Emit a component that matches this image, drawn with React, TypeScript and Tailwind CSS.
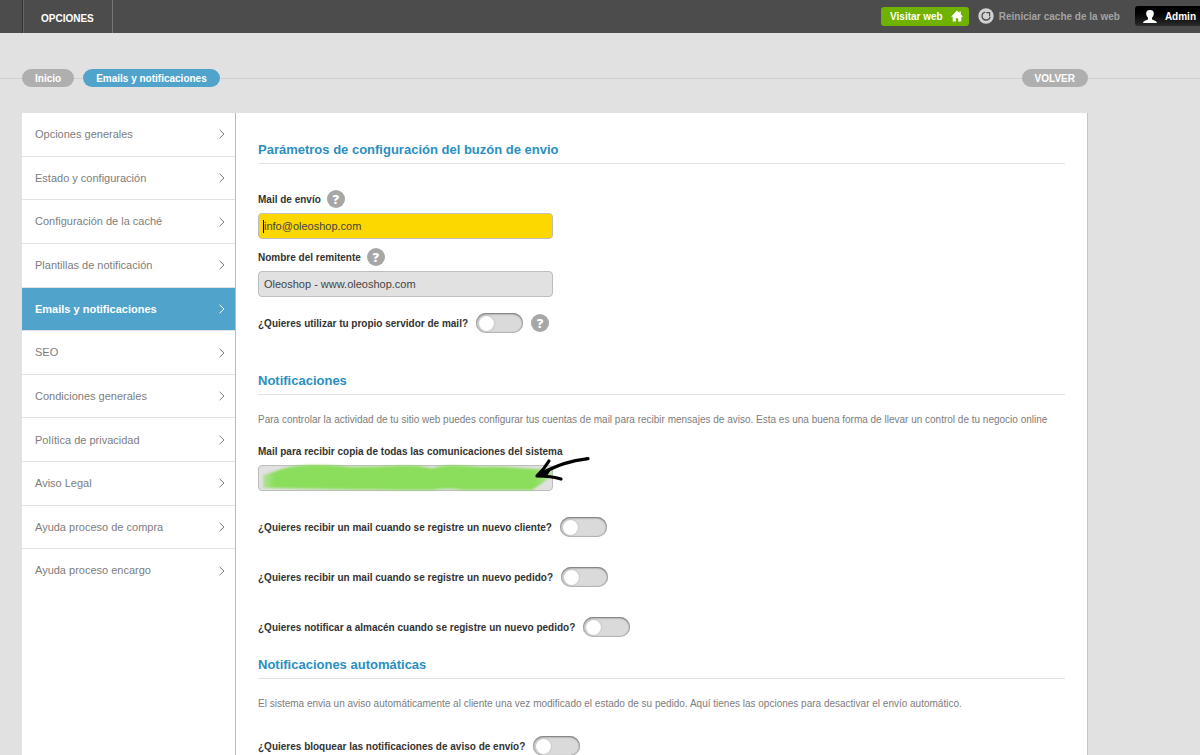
import { useState } from "react";

const menuItems = [
  "Opciones generales",
  "Estado y configuración",
  "Configuración de la caché",
  "Plantillas de notificación",
  "Emails y notificaciones",
  "SEO",
  "Condiciones generales",
  "Política de privacidad",
  "Aviso Legal",
  "Ayuda proceso de compra",
  "Ayuda proceso encargo",
];

const inputClass =
  "block h-[26px] w-[295px] rounded border border-[#bdbdbd] px-[5px] text-[11px] text-[#444] outline-none";

function HelpButton() {
  return (
    <button
      type="button"
      aria-label="Ayuda"
      className="flex size-[18px] items-center justify-center rounded-full bg-[#a6a6a6] font-['Open_Sans',sans-serif] text-[13px] leading-none font-extrabold text-white"
    >
      ?
    </button>
  );
}

interface ToggleRowProps {
  id: string;
  label: string;
  help?: boolean;
}

function ToggleRow({ id, label, help }: ToggleRowProps) {
  const [on, setOn] = useState(false);

  return (
    <div className="flex h-5 items-center gap-2">
      <label htmlFor={id} className="font-bold text-[#333]">
        {label}
      </label>
      <input
        id={id}
        type="checkbox"
        checked={on}
        onChange={() => setOn(!on)}
        className="flex h-5 w-[47px] appearance-none items-center rounded-full bg-[#dadada] px-[3px] shadow-[inset_0_1px_2px_#777,inset_0_0_1px_1px_#b4b4b4] before:size-[15px] before:rounded-full before:bg-white before:shadow-[0_0_2px_#aaa] checked:justify-end checked:bg-[#53a6cc]"
      />
      {help && <HelpButton />}
    </div>
  );
}

function SectionTitle({ children }: { children: string }) {
  return (
    <h2 className="border-b border-[#e2e2e2] pt-px pb-[3px] text-[13px] leading-5 font-bold text-[#2a8fc1]">
      {children}
    </h2>
  );
}

function TopBar() {
  return (
    <header className="flex h-[33px] items-stretch justify-between overflow-hidden bg-[#4c4c4c] pl-[22px] font-bold">
      <a
        href="#opciones"
        className="flex items-center border-r border-l border-r-[#777] border-l-[#333] px-[18px] pt-1 text-white shadow-[inset_1px_0_#666]"
      >
        OPCIONES
      </a>
      <div className="flex h-8 items-center">
        <a
          href="#web"
          className="mr-[9px] flex h-[19px] items-center gap-2 rounded-[3px] bg-[#70b200] pr-[6px] pl-[9px] text-white"
        >
          Visitar web
          <svg viewBox="0 0 12 12" className="size-3" fill="currentColor">
            <path d="M6 .6 L8.3 2.9 V1.4 H9.8 V4.4 L12 6.7 H10.3 V11.5 H7.2 V8.2 H4.8 V11.5 H1.7 V6.7 H0 Z" />
          </svg>
        </a>
        <button type="button" className="mr-[15px] flex items-center gap-[5px] text-[#a3a3a3]">
          <svg viewBox="0 0 16 16" className="size-4">
            <circle cx="8" cy="8" r="7.7" fill="#d2d2d2" />
            <path d="M7.2 4.1 A4 4 0 1 0 12 8.6" fill="none" stroke="#4c4c4c" strokeWidth="1.3" />
            <path d="M8.2 4.6 H11.6 V8" fill="none" stroke="#4c4c4c" strokeWidth="1.2" />
          </svg>
          Reiniciar cache de la web
        </button>
        <button
          type="button"
          className="flex h-5 items-center gap-2 rounded-l-[3px] bg-linear-to-b from-black to-[#2c2c2c] pr-1 pl-2 text-white"
        >
          <svg viewBox="0 0 14 13" className="h-[13px] w-[14px]" fill="currentColor">
            <path d="M7 0 C9.8 0 11 1.6 10.8 4 C10.6 5.8 9.8 7 9 7.8 V9.2 C10.2 10.4 13.6 10.6 14 13 H0 C.4 10.6 3.8 10.4 5 9.2 V7.8 C4.2 7 3.4 5.8 3.2 4 C3 1.6 4.2 0 7 0 Z" />
          </svg>
          Admin
        </button>
      </div>
    </header>
  );
}

function Breadcrumb() {
  return (
    <nav className="mt-9 flex items-center font-bold text-white">
      <span className="h-px w-[22px] bg-[#cfcfcf]" />
      <a href="#inicio" className="flex h-[18px] items-center rounded-full bg-[#afafaf] px-[13px]">
        Inicio
      </a>
      <span className="h-px w-[9px] bg-[#cfcfcf]" />
      <a href="#emails" className="flex h-[18px] items-center rounded-full bg-[#50a4cb] px-[13px]">
        Emails y notificaciones
      </a>
      <span className="h-px flex-1 bg-[#cfcfcf]" />
      <a href="#volver" className="flex h-[18px] items-center rounded-full bg-[#afafaf] px-[13px]">
        VOLVER
      </a>
      <span className="h-px w-28 bg-[#cfcfcf]" />
    </nav>
  );
}

function Sidebar() {
  const [active, setActive] = useState("Emails y notificaciones");

  return (
    <nav className="w-[214px] shrink-0 border-r border-[#bbb]">
      <ul className="flex h-[479px] flex-col text-[11px]">
        {menuItems.map((item) => (
          <li key={item} className="flex-1 border-b border-[#e2e2e2] last:border-b-0">
            <a
              href="#menu"
              onClick={() => setActive(item)}
              className={
                item === active
                  ? "flex h-full items-center justify-between bg-[#50a4cb] pr-[10px] pl-[13px] font-bold text-white"
                  : "flex h-full items-center justify-between pr-[10px] pl-[13px] text-[#7d7d7d]"
              }
            >
              {item}
              <svg viewBox="0 0 6 10" className="h-[10px] w-[6px]" fill="none" stroke="currentColor">
                <path d="M.6 .8 L5 5 L.6 9.2" />
              </svg>
            </a>
          </li>
        ))}
      </ul>
    </nav>
  );
}

function MailSettings() {
  return (
    <section>
      <SectionTitle>Parámetros de configuración del buzón de envio</SectionTitle>
      <div className="mt-[25px] flex h-5 items-center gap-[6px]">
        <label htmlFor="mail" className="font-bold text-[#333]">
          Mail de envío
        </label>
        <HelpButton />
      </div>
      <div className="relative mt-1">
        <input id="mail" type="email" defaultValue="info@oleoshop.com" className={`${inputClass} bg-[#fdd700]`} />
        {/* text cursor */}
        <span className="absolute top-[7px] left-[5px] h-[13px] w-px bg-black" />
      </div>
      <div className="mt-2 flex h-5 items-center gap-[6px]">
        <label htmlFor="sender" className="font-bold text-[#333]">
          Nombre del remitente
        </label>
        <HelpButton />
      </div>
      <input
        id="sender"
        type="text"
        defaultValue="Oleoshop - www.oleoshop.com"
        className={`${inputClass} mt-1 bg-[#e1e1e1]`}
      />
      <div className="mt-4">
        <ToggleRow id="own-server" label="¿Quieres utilizar tu propio servidor de mail?" help />
      </div>
    </section>
  );
}

function Notifications() {
  return (
    <section className="mt-[37px]">
      <SectionTitle>Notificaciones</SectionTitle>
      <p className="mt-[15px] leading-5 text-[#7d7d7d]">
        Para controlar la actividad de tu sitio web puedes configurar tus cuentas de mail para recibir mensajes de
        aviso. Esta es una buena forma de llevar un control de tu negocio online
      </p>
      <label htmlFor="copy" className="mt-3 block leading-5 font-bold text-[#333]">
        Mail para recibir copia de todas las comunicaciones del sistema
      </label>
      <div className="relative mt-[3px]">
        <input id="copy" type="email" className={`${inputClass} bg-[#e1e1e1]`} />
        {/* marker strokes and arrow over the address */}
        <svg viewBox="0 0 340 40" className="pointer-events-none absolute -top-2 left-0 h-10 w-[340px]">
          <defs>
            <filter id="soft" x="-5%" y="-20%" width="110%" height="140%">
              <feGaussianBlur stdDeviation="0.8" />
            </filter>
            <linearGradient id="marker">
              <stop offset="0" stopColor="#8bde5c" stopOpacity="0.5" />
              <stop offset="0.04" stopColor="#8bde5c" />
              <stop offset="0.94" stopColor="#8bde5c" />
              <stop offset="1" stopColor="#8bde5c" stopOpacity="0.5" />
            </linearGradient>
          </defs>
          <path
            d="M5 18 C12 17 20 12 32 10 C50 7 75 8 92 10 C120 10 140 8 158 9 C166 9 170 12 176 11 C190 7 205 9 225 10 C245 9 260 11 279 12 L294 12 V19 C289 22 284 27 274 33 H205 C195 32 190 31 175 33 C110 33 60 32 5 31 Z"
            fill="url(#marker)"
            filter="url(#soft)"
          />
          <g fill="none" stroke="#000" strokeLinecap="round" strokeLinejoin="round">
            <path d="M330 1.6 C312 3.5 300 8 282 17" strokeWidth="3.2" />
            <path d="M291 4 C288 9 284 14 279 19 C289 19 297 20 303 22" strokeWidth="3.2" />
            <path d="M279 19 L292 12 L288 19 Z" fill="#000" strokeWidth="2" />
          </g>
        </svg>
      </div>
      <div className="mt-[26px] flex flex-col gap-[30px]">
        <ToggleRow id="new-client" label="¿Quieres recibir un mail cuando se registre un nuevo cliente?" />
        <ToggleRow id="new-order" label="¿Quieres recibir un mail cuando se registre un nuevo pedido?" />
        <ToggleRow id="warehouse" label="¿Quieres notificar a almacén cuando se registre un nuevo pedido?" />
      </div>
    </section>
  );
}

function AutoNotifications() {
  return (
    <section className="mt-[17px]">
      <SectionTitle>Notificaciones automáticas</SectionTitle>
      <p className="mt-[15px] mb-[22px] leading-5 text-[#7d7d7d]">
        El sistema envia un aviso automáticamente al cliente una vez modificado el estado de su pedido. Aquí tienes las
        opciones para desactivar el envío automático.
      </p>
      <ToggleRow id="block-shipping" label="¿Quieres bloquear las notificaciones de aviso de envío?" />
    </section>
  );
}

export default function App() {
  return (
    <div className="flex min-h-screen flex-col bg-[#e1e1e1] font-['Liberation_Sans',Arial,sans-serif] text-[10px]">
      <TopBar />
      <Breadcrumb />
      <div className="mt-[26px] mr-28 ml-[22px] flex flex-1 border-r border-[#c4c4c4] bg-white">
        <Sidebar />
        <main className="min-w-0 flex-1 px-[22px] pt-[26px]">
          <MailSettings />
          <Notifications />
          <AutoNotifications />
        </main>
      </div>
    </div>
  );
}
